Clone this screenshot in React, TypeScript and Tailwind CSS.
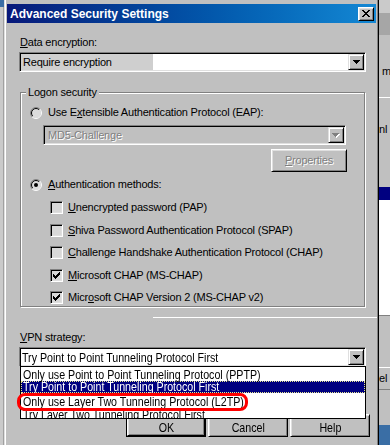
import React from 'react';

const ui = "font-['Liberation_Sans',Arial,sans-serif] text-[11px] leading-[13px] tracking-[-0.2px] text-black";
const tall = "font-['Liberation_Sans',Arial,sans-serif] text-[13px] leading-[13px] tracking-normal";
const sunken = "border border-t-[#808080] border-l-[#808080] border-r-white border-b-white shadow-[inset_1px_1px_0_#000,inset_-1px_-1px_0_#dfdfdf] p-[1px]";
const raised = "border border-t-white border-l-white border-r-black border-b-black bg-[#c0c0c0] shadow-[inset_1px_1px_0_#dfdfdf,inset_-1px_-1px_0_#808080]";

// the lower half of the screenshot has tall, narrow lettering
function Narrow({ children, center }: { children: React.ReactNode; center?: boolean }) {
  return (
    <span className={center ? 'inline-block origin-center scale-x-[0.82]' : 'inline-block origin-left scale-x-[0.82]'}>
      {children}
    </span>
  );
}

function Pixels({ w, h, rows, color }: { w: number; h: number; rows: number[][]; color: string }) {
  return (
    <svg width={w} height={h} viewBox={`0 0 ${w} ${h}`} shapeRendering="crispEdges">
      {rows.map(([x, y, len], i) => (
        <rect key={i} x={x} y={y} width={len} height={1} fill={color} />
      ))}
    </svg>
  );
}

const arrowRows = [[0, 0, 7], [1, 1, 5], [2, 2, 3], [3, 3, 1]];
const checkRows = [[6, 0, 1], [5, 1, 2], [0, 2, 1], [4, 2, 3], [0, 3, 2], [3, 3, 3], [0, 4, 5], [1, 5, 3], [2, 6, 1]];
const closeRows = [[0, 0, 2], [6, 0, 2], [1, 1, 2], [5, 1, 2], [2, 2, 4], [3, 3, 2], [2, 4, 4], [1, 5, 2], [5, 5, 2], [0, 6, 2], [6, 6, 2]];

function ArrowButton({ disabled }: { disabled?: boolean }) {
  return (
    <div className="flex h-[16px] w-[16px] shrink-0 items-center justify-center border border-t-[#dfdfdf] border-l-[#dfdfdf] border-r-black border-b-black bg-[#c0c0c0] shadow-[inset_1px_1px_0_#fff,inset_-1px_-1px_0_#808080]">
      {disabled ? (
        <div className="relative h-[5px] w-[8px]">
          <div className="absolute left-[1px] top-[1px]">
            <Pixels w={7} h={4} rows={arrowRows} color="#fff" />
          </div>
          <div className="absolute left-0 top-0">
            <Pixels w={7} h={4} rows={arrowRows} color="#808080" />
          </div>
        </div>
      ) : (
        <Pixels w={7} h={4} rows={arrowRows} color="#000" />
      )}
    </div>
  );
}

function Radio({ checked }: { checked?: boolean }) {
  return (
    <svg width="12" height="12" viewBox="0 0 12 12" className="shrink-0">
      <circle cx="6" cy="6" r="4.5" fill="#dcdcdc" />
      <path d="M2.111 9.889 A5.5 5.5 0 0 1 9.889 2.111" fill="none" stroke="#808080" />
      <path d="M9.889 2.111 A5.5 5.5 0 0 1 2.111 9.889" fill="none" stroke="#fff" />
      <path d="M2.818 9.182 A4.5 4.5 0 0 1 9.182 2.818" fill="none" stroke="#000" />
      <path d="M9.182 2.818 A4.5 4.5 0 0 1 2.818 9.182" fill="none" stroke="#dfdfdf" />
      {checked && <circle cx="6" cy="6" r="2" fill="#000" />}
    </svg>
  );
}

function Check({ checked }: { checked?: boolean }) {
  return (
    <div className="flex h-[13px] w-[13px] shrink-0 items-center justify-center border border-t-[#808080] border-l-[#808080] border-r-white border-b-white bg-[#d8d8d8] shadow-[inset_1px_1px_0_#000,inset_-1px_-1px_0_#dfdfdf]">
      {checked && <Pixels w={7} h={7} rows={checkRows} color="#000" />}
    </div>
  );
}

function TitleBar() {
  return (
    <div className="mx-[2px] mt-[4px] flex h-[19px] items-center justify-between bg-linear-to-r from-[#08187a] to-[#1488d4] pl-[3px] pr-[2px]">
      <span className="font-['Liberation_Sans',Arial,sans-serif] text-[12px] font-bold leading-[14px] text-white">
        Advanced Security Settings
      </span>
      <div className={`flex h-[14px] w-[16px] items-center justify-center ${raised}`}>
        <Pixels w={8} h={7} rows={closeRows} color="#000" />
      </div>
    </div>
  );
}

function RightStrip() {
  return (
    <div className="flex w-[11px] flex-col overflow-hidden whitespace-nowrap bg-[#c0c0c0] font-['Liberation_Sans',Arial,sans-serif] text-[11px] leading-[13px] text-black">
      <div className="h-[13px] bg-[#cacaca]" />
      <div className="h-[22px] bg-[#a6a6a6]" />
      <div className="h-[62px] pl-[3px] pt-[30px]">me</div>
      <div className="h-px bg-white" />
      <div className="h-[89px] pt-[25px]">nl</div>
      <div className="h-[13px] bg-[#000080]" />
      <div className="h-[115px] bg-white" />
      <div className="h-px bg-[#808080]" />
      <div className="h-[51px]" />
      <div className="h-[22px] border-t border-white pt-[4px]">el</div>
      <div className="h-[36px] border-t border-[#808080]" />
      <div className="flex-1 bg-[#3a6ea5]" />
    </div>
  );
}

const methods: { label: React.ReactNode; checked?: boolean }[] = [
  { label: <><u>U</u>nencrypted password (PAP)</> },
  { label: <><u>S</u>hiva Password Authentication Protocol (SPAP)</> },
  { label: <><u>C</u>hallenge Handshake Authentication Protocol (CHAP)</> },
  { label: <><u>M</u>icrosoft CHAP (MS-CHAP)</>, checked: true },
  { label: <>Micr<u>o</u>soft CHAP Version 2 (MS-CHAP v2)</>, checked: true },
];

export default function App() {
  return (
    <div className="flex h-[445px] w-[390px] overflow-hidden bg-[#c0c0c0]">
      <div className="flex w-[4px] flex-col bg-[#cacaca]">
        <div className="h-[7px] bg-[#3a6ea5]" />
        <div className="flex-1 border-r border-[#a0a0a0]" />
      </div>

      <div className="flex w-[375px] flex-col border-l border-r border-l-[#dfdfdf] border-r-black bg-[#c0c0c0] shadow-[inset_1px_0_0_#fff,inset_-1px_0_0_#808080]">
        <TitleBar />

        <div className={`flex flex-col items-start pl-[14px] ${ui}`}>
          <div className="ml-[1px] mt-[13px]"><u>D</u>ata encryption:</div>
          <div className={`mt-[3px] flex h-[20px] w-[347px] bg-white ${sunken}`}>
            <div className="flex w-[132px] items-center whitespace-nowrap bg-[#cfcfcf] pl-[2px]">Require encryption</div>
            <div className="flex-1 bg-white" />
            <ArrowButton />
          </div>

          <fieldset className="ml-[1px] mt-[14px] w-[345px] border border-[#808080] pb-[2px] shadow-[inset_1px_1px_0_#fff,1px_1px_0_#fff]">
            <legend className="ml-[5px] bg-[#c0c0c0] px-[2px]">Logon security</legend>

            <div className="ml-[9px] mt-[7px] flex items-center gap-[6px]">
              <Radio />
              <span>Use E<u>x</u>tensible Authentication Protocol (EAP):</span>
            </div>
            <div className={`ml-[22px] mt-[6px] flex h-[20px] w-[303px] bg-[#c0c0c0] ${sunken}`}>
              <div className="flex flex-1 items-center pl-[3px] text-[#808080] [text-shadow:1px_1px_0_#fff]">MD5-Challenge</div>
              <ArrowButton disabled />
            </div>
            <div className={`ml-[250px] mt-[4px] flex h-[23px] w-[76px] items-center justify-center text-[#808080] [text-shadow:1px_1px_0_#fff] ${raised}`}>
              <span><u>P</u>roperties</span>
            </div>

            <div className="ml-[9px] mt-[6px] flex items-center gap-[6px]">
              <Radio checked />
              <span><u>A</u>uthentication methods:</span>
            </div>
            <div className="ml-[29px] mt-[10px] flex flex-col gap-[9.5px]">
              {methods.map((m, i) => (
                <div key={i} className="flex h-[13px] items-center gap-[5px] whitespace-nowrap">
                  <Check checked={m.checked} />
                  <span>{m.label}</span>
                </div>
              ))}
            </div>
          </fieldset>

          <div className="ml-[134px] mt-[10px] h-px w-[224px] bg-white" />

          <div className="ml-[1px] mt-[13px]"><u>V</u>PN strategy:</div>
          <div className="relative mt-[3px]">
            <div className={`flex h-[20px] w-[347px] bg-white ${sunken}`}>
              <div className={`flex flex-1 items-center whitespace-nowrap pl-[1px] ${tall}`}>
                <Narrow>Try Point to Point Tunneling Protocol First</Narrow>
              </div>
              <ArrowButton />
            </div>
            <div className={`absolute left-[1px] top-[19px] z-10 flex h-[53px] w-[346px] flex-col overflow-hidden whitespace-nowrap border border-black bg-white ${tall}`}>
              <div className="h-[14px] shrink-0 pl-[2px] pt-[1px]">
                <Narrow>Only use Point to Point Tunneling Protocol (PPTP)</Narrow>
              </div>
              <div className="h-[12px] shrink-0 overflow-hidden bg-[#000080] pl-[2px] leading-[12px] text-white outline-1 -outline-offset-1 outline-dotted outline-[#e8e890]">
                <Narrow>Try Point to Point Tunneling Protocol First</Narrow>
              </div>
              <div className="h-[14px] shrink-0 pl-[2px] pt-[2px]">
                <Narrow>Only use Layer Two Tunneling Protocol (L2TP)</Narrow>
              </div>
              <div className="h-[11px] shrink-0 overflow-hidden pl-[2px] pt-[1px]">
                <Narrow>Try Layer Two Tunneling Protocol First</Narrow>
              </div>
            </div>
            <div className="absolute left-[-2px] top-[46px] z-20 h-[18px] w-[231px] rounded-[8px] border-[3px] border-[#ff0000]" />
          </div>

          <div className={`ml-[107px] mt-[47px] flex gap-[2px] ${tall}`}>
            <div className="h-[23px] w-[80px] border border-black">
              <div className={`flex h-full w-full items-center justify-center pt-[4px] ${raised}`}>
                <Narrow center>OK</Narrow>
              </div>
            </div>
            <div className={`flex h-[23px] w-[80px] items-center justify-center pt-[4px] ${raised}`}>
              <Narrow center>Cancel</Narrow>
            </div>
            <div className={`flex h-[23px] w-[80px] items-center justify-center pt-[4px] ${raised}`}>
              <Narrow center>Help</Narrow>
            </div>
          </div>
        </div>
      </div>

      <RightStrip />
    </div>
  );
}
